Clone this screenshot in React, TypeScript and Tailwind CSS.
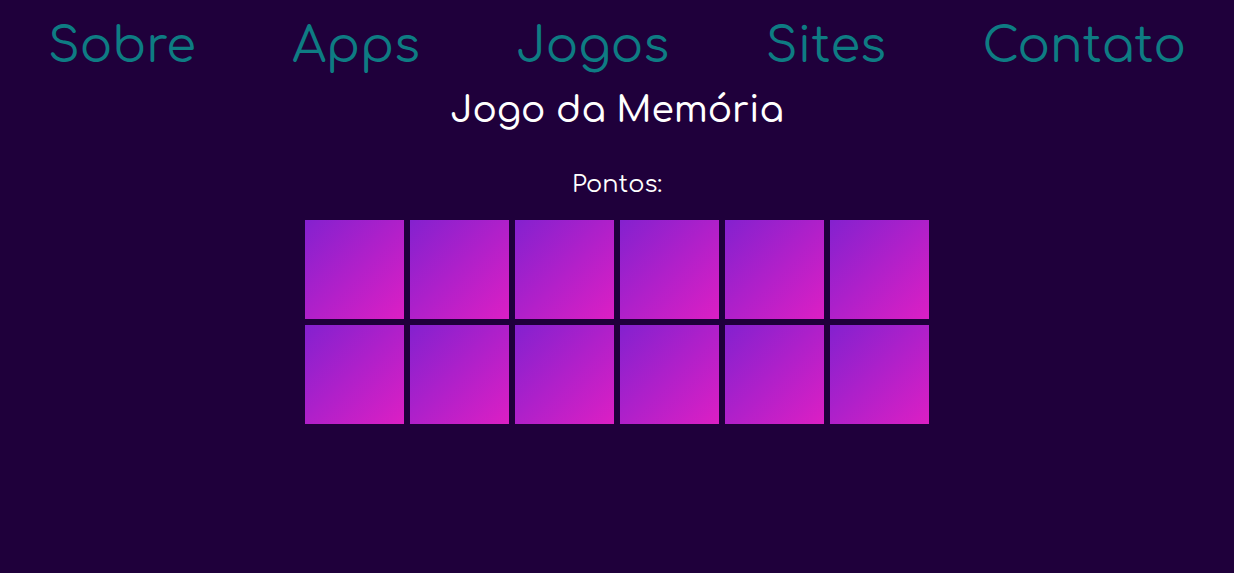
const links = ["Sobre", "Apps", "Jogos", "Sites", "Contato"];
const cards = Array.from({ length: 12 }, (_, i) => i + 1);

export default function App() {
  return (
    <div className="flex min-h-screen flex-col items-center bg-[#1f003b] font-['Comfortaa','Lato',sans-serif] text-white">
      <nav className="flex w-full justify-between px-12 pt-4">
        {links.map((name) => (
          <a key={name} href={`#${name.toLowerCase()}`} className="text-5xl leading-[62px] text-[#0e7c83]">
            {name}
          </a>
        ))}
      </nav>
      <main className="flex flex-col items-center">
        <h1 className="mt-1.5 text-4xl leading-[52px] font-medium">Jogo da Memória</h1>
        <p className="mt-8 text-2xl leading-[34px]">Pontos:</p>
        <div className="mt-[18px] grid grid-cols-6 gap-[6px]">
          {cards.map((n) => (
            <button
              key={n}
              type="button"
              aria-label={`Carta ${n}`}
              className="size-[99px] bg-linear-135/srgb from-[#8421cf] to-[#dc1fc4]"
            />
          ))}
        </div>
      </main>
    </div>
  );
}
